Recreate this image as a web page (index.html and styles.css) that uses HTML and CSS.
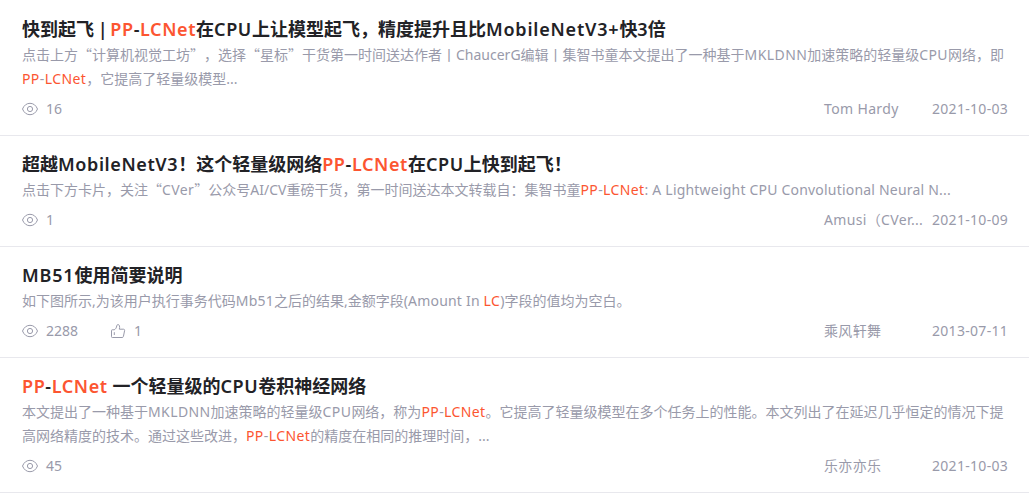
FILE: index.html
```
<!DOCTYPE html>
<html lang="zh-CN">
<head>
  <meta charset="UTF-8" />
  <title>搜索结果</title>
  <link rel="stylesheet" href="styles.css">
</head>
<body>
  <!-- 图标 -->
  <svg class="sprite">
    <symbol id="icon-eye" viewBox="0 0 16 16">
      <path d="M.5 8C2 4.300 4.700 2.300 8 2.300S14 4.300 15.500 8C14 11.700 11.300 13.700 8 13.700S2 11.700.5 8z" />
      <circle cx="8" cy="8" r="2.600" />
    </symbol>
    <symbol id="icon-like" viewBox="0 0 16 16">
      <path d="M1.500 7.500Q1.500 6.800 2.200 6.800H4.200C5.600 6.200 6.500 4.800 6.800 2.600C7 1.300 8.900 1.200 9.400 2.600C9.800 3.800 9.700 5 9.300 6.200H13.500C14.300 6.200 14.800 6.800 14.600 7.600L13.400 13.500C13.200 14.200 12.800 14.500 12.100 14.500H2.300Q1.500 14.500 1.500 13.700zM4.300 9.200V12" />
    </symbol>
  </svg>

  <div class="result-list">
    <div class="result">
      <h3 class="title">快到起飞<span class="bar"> | </span><em>PP</em><span class="en">-</span><em>LCNet</em>在<span class="en">CPU</span>上让模型起飞，精度提升且比<span class="en wide">MobileNetV3+</span>快3倍</h3>
      <p class="desc">点击上方<span class="quote">“</span>计算机视觉工坊<span class="quote">”</span>，选择<span class="quote">“</span>星标<span class="quote">”</span>干货第一时间送达作者丨ChaucerG编辑丨集智书童本文提出了一种基于<span class="en">MKLDNN</span>加速策略的轻量级<span class="en">CPU</span>网络，即<br><em>PP</em><span class="en">-</span><em>LCNet</em>，它提高了轻量级模型...</p>
      <div class="meta">
        <span class="count"><svg class="icon"><use href="#icon-eye" /></svg>16</span>
        <span class="author">Tom Hardy</span>
        <span class="date">2021-10-03</span>
      </div>
    </div>

    <div class="result">
      <h3 class="title">超越<span class="en">MobileNetV3</span>！这个轻量级网络<em>PP</em><span class="en">-</span><em>LCNet</em>在<span class="en">CPU</span>上快到起飞！</h3>
      <p class="desc">点击下方卡片，关注<span class="quote">“</span><span class="en">CVer</span><span class="quote">”</span>公众号AI/CV重磅干货，第一时间送达本文转载自：集智书童<em>PP</em><span class="en">-</span><em>LCNet</em><span class="sentence">: A Lightweight CPU Convolutional Neural N...</span></p>
      <div class="meta">
        <span class="count"><svg class="icon"><use href="#icon-eye" /></svg>1</span>
        <span class="author">Amusi（CVer...</span>
        <span class="date">2021-10-09</span>
      </div>
    </div>

    <div class="result">
      <h3 class="title"><span class="en wide">MB51</span>使用简要说明</h3>
      <p class="desc">如下图所示,为该用户执行事务代码<span class="sentence">Mb51</span>之后的结果,金额字段<span class="sentence">(Amount In </span><em>LC</em>)字段的值均为空白。</p>
      <div class="meta">
        <span class="count"><svg class="icon"><use href="#icon-eye" /></svg>2288</span>
        <span class="count"><svg class="icon"><use href="#icon-like" /></svg>1</span>
        <span class="author">乘风轩舞</span>
        <span class="date">2013-07-11</span>
      </div>
    </div>

    <div class="result">
      <h3 class="title"><em>PP</em><span class="en">-</span><em>LCNet</em> 一个轻量级的<span class="en">CPU</span>卷积神经网络</h3>
      <p class="desc">本文提出了一种基于<span class="en">MKLDNN</span>加速策略的轻量级<span class="en">CPU</span>网络，称为<em>PP</em><span class="en">-</span><em>LCNet</em>。它提高了轻量级模型在多个任务上的性能。本文列出了在延迟几乎恒定的情况下提<br>高网络精度的技术。通过这些改进，<em>PP</em><span class="en">-</span><em>LCNet</em>的精度在相同的推理时间，...</p>
      <div class="meta">
        <span class="count"><svg class="icon"><use href="#icon-eye" /></svg>45</span>
        <span class="author">乐亦亦乐</span>
        <span class="date">2021-10-03</span>
      </div>
    </div>
  </div>
</body>
</html>
```
FILE: styles.css
```
body {
  margin: 0;
  padding-top: 1px;
  background-color: #fff;
  color: #999aaa;
  font-family: "Noto Sans", "Noto Sans CJK SC", sans-serif;
  font-size: 14px;
  text-spacing-trim: space-all;
  overflow: hidden;
}

em {
  font-style: normal;
  color: #fc5531;
}

.sprite {
  display: none;
}

.result {
  padding: 16px 21px 16px 22px;
  border-bottom: 1px solid #e8e8ed;
}

.title {
  height: 24px;
  margin: 0 0 2px;
  color: #222226;
  font-size: 18px;
  font-weight: 600;
  line-height: 24px;
  white-space: nowrap;
}

.title em,
.title .en {
  letter-spacing: 0.6px;
}

.title .wide {
  letter-spacing: 0.8px;
}

.title .bar {
  letter-spacing: -1px;
}

.desc {
  margin: 0 0 8px;
  line-height: 24px;
  white-space: nowrap;
}

.desc em,
.desc .en {
  letter-spacing: 0.4px;
}

.desc .sentence {
  letter-spacing: 0.2px;
}

/* 全角引号 */
.quote {
  font-family: "Noto Sans CJK SC", sans-serif;
  line-height: 1;
}

.meta {
  display: flex;
  line-height: 20px;
}

.count {
  display: flex;
  align-items: center;
  margin-right: 32px;
}

.icon {
  width: 16px;
  height: 16px;
  margin-right: 8px;
  fill: none;
  stroke: #999aaa;
  stroke-width: 1;
}

.author {
  width: 100px;
  margin-left: auto;
  letter-spacing: 0.35px;
  white-space: nowrap;
}

.date {
  width: 76px;
  margin-left: 8px;
  letter-spacing: 0.3px;
  white-space: nowrap;
}
```
